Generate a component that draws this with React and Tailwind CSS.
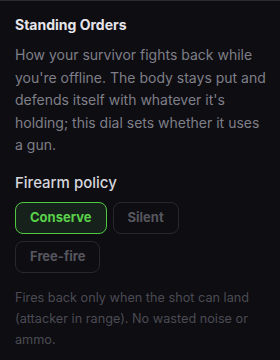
export default function App() {
  const options = ["Conserve", "Silent", "Free-fire"];
  const active = "Conserve";

  return (
    <div className="w-[280px] h-[360px] bg-[#0e0d12] border-t border-[#2a2a31] font-['Inter',sans-serif] overflow-hidden">
      <div className="pl-[15px] pr-[12px] pt-[14px]">
        <h2 className="text-[14px] font-bold text-[#e6e6ea] leading-[20px]">Standing Orders</h2>
        <p className="mt-[9px] text-[14px] leading-[22.5px] text-[#7f7f88]">
          How your survivor fights back while you're offline. The body stays put and defends itself with whatever it's holding; this dial sets whether it uses a gun.
        </p>

        <h3 className="mt-[15px] text-[15px] font-medium text-[#d6d6dc] leading-[22px]">Firearm policy</h3>
        <div className="mt-[8px] flex flex-wrap gap-x-[6px] gap-y-[7px] max-w-[250px]">
          {options.map((o) =>
            o === active ? (
              <button
                key={o}
                className="h-[32px] px-[14px] rounded-[8px] border border-[#4fc942] bg-[#15211a] text-[13px] font-bold text-[#5bd14b]"
              >
                {o}
              </button>
            ) : (
              <button
                key={o}
                className="h-[32px] px-[14px] rounded-[8px] border border-[#27272d] text-[13px] font-bold text-[#56565e]"
              >
                {o}
              </button>
            )
          )}
        </div>

        <p className="mt-[14px] text-[12.7px] leading-[21px] text-[#4b4b53] max-w-[250px]">
          Fires back only when the shot can land (attacker in range). No wasted noise or ammo.
        </p>
      </div>
    </div>
  );
}
